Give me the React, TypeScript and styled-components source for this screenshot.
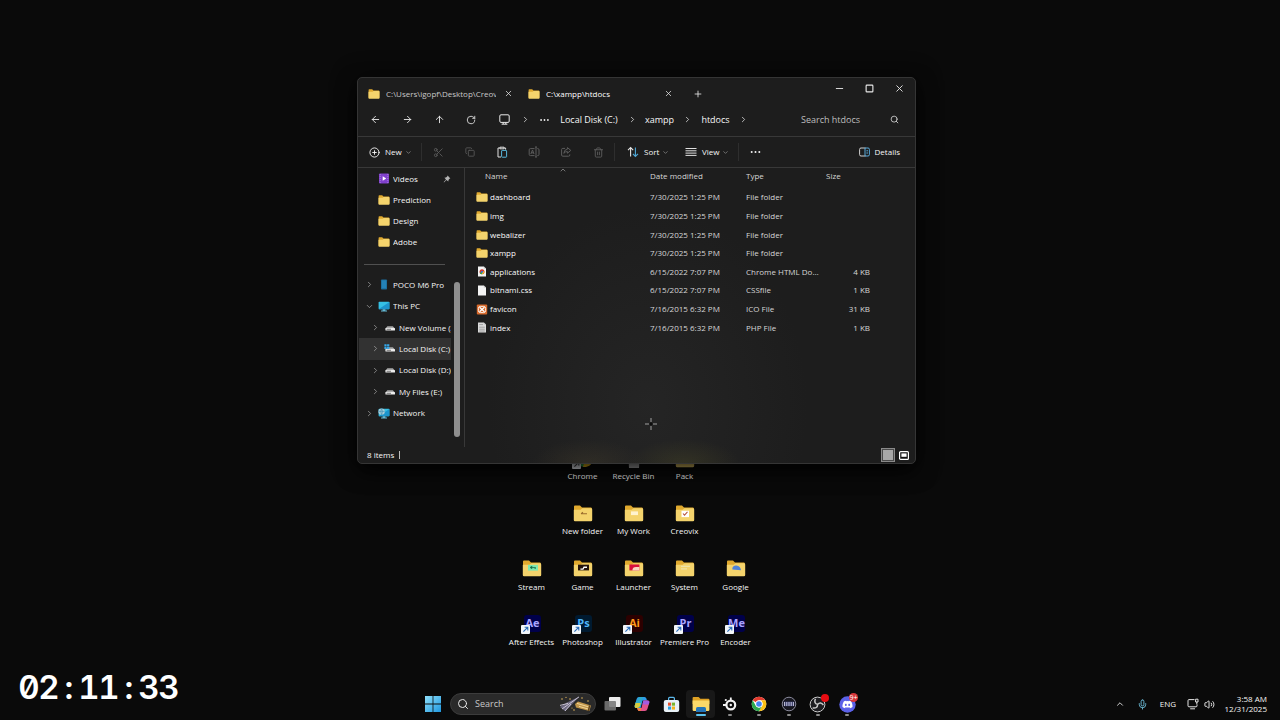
import React from 'react';
import styled, { createGlobalStyle } from 'styled-components';
import {
  ArrowLeft, ArrowRight, ArrowUp, RotateCw, ChevronRight, ChevronDown, ChevronUp, X, Plus,
  Minus, Square, Search, CirclePlus, Scissors, Copy, Trash2, Mic, Volume2,
} from 'lucide-react';
import { FaDiscord } from 'react-icons/fa';

const Global = createGlobalStyle`
  *, *::before, *::after { box-sizing: border-box; }
  html, body { margin: 0; background: #0a0a0a; }
  body, button, input { font-family: "Open Sans", "Noto Sans", sans-serif; font-size: 8px; line-height: 12px; color: #f6f6f6; }
  button { background: none; border: 0; padding: 0; }
  svg { display: block; flex: none; }
`;

/* ---------- desktop ---------- */
const Desktop = styled.div`
  position: relative;
  display: flex;
  flex-direction: column;
  min-height: 100vh;
  overflow: hidden;
  background: #0a0a0a;
`;
const IconField = styled.main`
  flex: 1;
  display: flex;
  flex-direction: column;
  align-items: center;
  justify-content: flex-end;
  padding: 0 13px 40px 0;
`;
const IconRows = styled.div`
  height: 200px;
  display: flex;
  flex-direction: column;
  justify-content: space-between;
`;
const IconRow = styled.div`
  display: flex;
  justify-content: center;
`;
const Shortcut = styled.button`
  width: 51px;
  display: flex;
  flex-direction: column;
  align-items: center;
  gap: 2px;
  white-space: nowrap;
`;
const Art = styled.span`
  height: 20px;
  display: flex;
  align-items: center;
`;

/* ---------- explorer window ---------- */
const Window = styled.section`
  position: absolute;
  top: 77px;
  left: calc(50% - 283px);
  width: 559px;
  height: 387px;
  display: flex;
  flex-direction: column;
  border: 1px solid #353535;
  border-radius: 5px;
  overflow: hidden;
  background:
    radial-gradient(56px 24px at 230px 100%, rgba(90, 78, 50, .24), transparent),
    radial-gradient(56px 24px at 326px 100%, rgba(96, 92, 40, .26), transparent),
    radial-gradient(160px 200px at 290px 85%, rgba(60, 60, 60, .25), transparent),
    #1d1d1d;
  box-shadow: 0 8px 20px rgba(0, 0, 0, .7), 0 2px 24px rgba(0, 0, 0, .5);
`;
const TitleBar = styled.header`
  height: 28px;
  display: flex;
  align-items: flex-start;
`;
const Tab = styled.div<{ $active?: boolean }>`
  width: 160px;
  height: 31px;
  display: flex;
  align-items: center;
  gap: 6px;
  padding: 0 2px 0 10px;
  color: ${p => (p.$active ? '#ffffff' : '#c8c8c8')};
`;
const TabName = styled.span`
  flex: 1;
  margin-right: -2px;
  overflow: hidden;
  white-space: nowrap;
`;
const IconButton = styled.button<{ $w?: number; $dim?: boolean }>`
  width: ${p => p.$w ?? 32}px;
  height: 20px;
  display: flex;
  flex: none;
  align-items: center;
  justify-content: center;
  color: ${p => (p.$dim ? '#5c5c5c' : '#e8e8e8')};
`;
const NewTab = styled(IconButton)`
  height: 31px;
`;
const WindowControls = styled.div`
  display: flex;
  padding-right: 1px;
`;
const Spacer = styled.span`
  flex: 1;
`;
const NavBar = styled.nav`
  height: 31px;
  display: flex;
  align-items: center;
  padding: 0 9px 3px 1px;
  border-bottom: 1px solid #383838;
`;
const Crumb = styled.button<{ $w: number }>`
  width: ${p => p.$w}px;
  font-size: 9px;
  white-space: nowrap;
`;
const SearchBox = styled.input`
  width: 82px;
  padding: 0;
  border: 0;
  outline: 0;
  background: none;
  font-size: 9px;
  &::placeholder { color: #bdbdbd; opacity: 1; }
`;
const CommandBar = styled.div`
  height: 31px;
  display: flex;
  align-items: center;
  padding: 0 15px 0 11px;
  border-bottom: 1px solid #383838;
`;
const Command = styled.button<{ $w: number }>`
  width: ${p => p.$w}px;
  display: flex;
  align-items: center;
  gap: 5px;
  & > svg:last-child { color: #a8a8a8; margin-left: -2px; }
`;
const Details = styled.button`
  display: flex;
  align-items: center;
  gap: 5px;
`;
const Rule = styled.span`
  width: 1px;
  height: 18px;
  background: #2e2e2e;
`;
const Gap = styled.span`
  width: 12px;
`;
const Body = styled.div`
  flex: 1;
  display: flex;
  min-height: 0;
`;
const Sidebar = styled.aside`
  position: relative;
  width: 107px;
  border-right: 1px solid #383838;
`;
const TreeGroup = styled.ul<{ $h: number }>`
  list-style: none;
  margin: 0;
  padding: 0 13px 0 1px;
  height: ${p => p.$h}px;
  display: grid;
  grid-auto-rows: 1fr;
`;
const TreeItem = styled.li<{ $level?: number; $selected?: boolean }>`
  display: flex;
  align-items: center;
  gap: 3px;
  min-width: 0;
  padding-left: ${p => (p.$level ? 10 : 4)}px;
  background: ${p => (p.$selected ? '#323232' : 'none')};
`;
const Twist = styled.span`
  width: 12px;
  display: flex;
  justify-content: center;
  color: #a0a0a0;
`;
const TreeName = styled.span`
  flex: 1;
  overflow: hidden;
  white-space: nowrap;
`;
const Divider = styled.hr`
  width: 81px;
  margin: 11px 0 9px 6px;
  border: 0;
  border-top: 1px solid #505050;
`;
const ScrollThumb = styled.span`
  position: absolute;
  right: 4px;
  top: 114px;
  width: 6px;
  height: 155px;
  border-radius: 3px;
  background: #8f8f8f;
`;
const Files = styled.div`
  position: relative;
  flex: 1;
`;
const SortMark = styled.span`
  position: absolute;
  left: 94px;
  top: -2px;
  color: #a0a0a0;
`;
const Table = styled.table`
  display: block;
  thead, tbody { display: grid; grid-auto-rows: 1fr; color: #d6d6d6; }
  thead { height: 20px; padding-bottom: 4px; }
  tbody { height: 149px; }
  tr { display: grid; grid-template-columns: 185px 96px 80px 44px; align-items: center; }
  th, td { padding: 0; font-weight: 400; text-align: left; white-space: nowrap; }
  th:first-child { padding-left: 20px; }
  td:nth-child(3) { width: 76px; overflow: hidden; text-overflow: ellipsis; }
  td:last-child { text-align: right; }
`;
const FileName = styled.span`
  display: flex;
  align-items: center;
  gap: 2px;
  padding-left: 11px;
  color: #fafafa;
`;
const StatusBar = styled.footer`
  height: 16px;
  display: flex;
  align-items: center;
  gap: 5px;
  padding: 0 4px 0 9px;
`;
const Caret = styled.span`
  width: 1px;
  height: 8px;
  background: #bdbdbd;
`;
const ViewButton = styled.button<{ $on?: boolean }>`
  width: 14px;
  height: 14px;
  display: flex;
  align-items: center;
  justify-content: center;
  margin-left: ${p => (p.$on ? 0 : -3)}px;
  border: 1px solid ${p => (p.$on ? '#8a8a8a' : 'transparent')};
  background: ${p => (p.$on ? '#4a4a4a' : 'none')};
`;
const Pointer = styled.span`
  position: absolute;
  left: calc(50% + 5px);
  top: 418px;
`;

/* ---------- overlay and taskbar ---------- */
const Timer = styled.time`
  position: absolute;
  left: 19px;
  bottom: 13px;
  font: 600 33px/40px Inter, "Liberation Mono", monospace;
  font-feature-settings: "tnum", "zero";
  display: grid;
  grid-auto-flow: column;
  grid-auto-columns: 20px;
  justify-items: center;
  color: #fff;
`;
const Taskbar = styled.footer`
  height: 32px;
  display: grid;
  grid-template-columns: 1fr auto 1fr;
  align-items: center;
`;
const Dock = styled.div`
  grid-column: 2;
  display: flex;
  align-items: center;
  padding-left: 5px;
`;
const TaskSearch = styled.label`
  width: 146px;
  height: 22px;
  margin: 0 2px 0 7px;
  padding: 0 2px 0 6px;
  display: flex;
  align-items: center;
  gap: 6px;
  border: 1px solid #3c3c3c;
  border-radius: 11px;
  background: #2a2a2a;
`;
const TaskInput = styled.input`
  flex: 1;
  min-width: 0;
  padding: 0;
  border: 0;
  outline: 0;
  background: none;
  font-size: 9px;
  &::placeholder { color: #c8c8c8; opacity: 1; }
`;
const Apps = styled.div`
  width: 264px;
  display: grid;
  grid-template-columns: repeat(9, 1fr);
`;
const AppButton = styled.button<{ $state?: 'active' | 'open' }>`
  position: relative;
  height: 28px;
  display: flex;
  align-items: center;
  justify-content: center;
  border-radius: 4px;
  background: ${p => (p.$state === 'active' ? '#181818' : 'none')};
  &::after {
    content: "";
    position: absolute;
    bottom: 2px;
    width: ${p => (p.$state === 'active' ? 10 : 4)}px;
    height: 2px;
    border-radius: 1px;
    background: ${p => (p.$state === 'active' ? '#5cc4f0' : p.$state ? '#8c8c8c' : 'none')};
  }
`;
const Badge = styled.span`
  position: absolute;
  top: 3px;
  right: 4px;
  min-width: 9px;
  height: 9px;
  border-radius: 5px;
  background: #d8363a;
  color: #fff;
  font-size: 7px;
  line-height: 9px;
  text-align: center;
`;
const RedDot = styled(Badge)`
  top: 4px;
  min-width: 8px;
  height: 8px;
  background: #e80c12;
`;
const Tray = styled.div`
  justify-self: end;
  display: flex;
  align-items: center;
  padding-right: 13px;
`;
const TrayButton = styled.button<{ $w: number }>`
  width: ${p => p.$w}px;
  display: flex;
  justify-content: center;
`;
const Clock = styled.div`
  width: 53px;
  text-align: right;
  line-height: 10px;
  white-space: nowrap;
`;

/* ---------- drawings ---------- */
const Folder = ({ w = 12, h = 10, children }: { w?: number; h?: number; children?: React.ReactNode }) => (
  <svg width={w} height={h} viewBox="0 0 20 16" preserveAspectRatio="none">
    <path d="M1 1.5Q1 .5 2 .5H7L9 2.4H18Q19 2.6 19 4V14H1Z" fill="#e0a92e" />
    <path d="M1 4.4H7.6L9.3 3H18Q19.2 3 19.2 4.2V14.2Q19.2 15.4 18 15.4H2Q.8 15.4.8 14.2V4.6Z" fill="#f4d36c" />
    {children}
  </svg>
);
const Adobe = ({ text, bg, fg }: { text: string; bg: string; fg: string }) => (
  <svg width="22" height="20" viewBox="0 0 22 20">
    <rect x="3" y="1" width="17" height="17" rx="3" fill={bg} />
    <text x="11.5" y="13.4" textAnchor="middle" fontSize="11" fontWeight="700" fontFamily="Open Sans, sans-serif" fill={fg}>{text}</text>
    <rect x="0" y="11" width="9" height="9" rx="1" fill="#f2f6fa" />
    <path d="M2.4 17.6 6.6 13.4M3.6 13.2H6.8V16.4" fill="none" stroke="#2a6cb8" strokeWidth="1.1" />
  </svg>
);
const ChromeLogo = ({ size = 17 }: { size?: number }) => (
  <svg width={size} height={size} viewBox="0 0 48 48">
    <circle cx="24" cy="24" r="22" fill="#fff" />
    <path d="M24 2A22 22 0 0 1 43 13H24A11 11 0 0 0 14.5 18.5L5 13A22 22 0 0 1 24 2Z" fill="#e33b2e" />
    <path d="M43 13A22 22 0 0 1 24 46L33.5 29.5A11 11 0 0 0 33.5 18.5L30 13Z" fill="#fbc116" />
    <path d="M5 13A22 22 0 0 0 24 46L33.5 29.5A11 11 0 0 1 14.5 29.5Z" fill="#2da94f" />
    <circle cx="24" cy="24" r="10.5" fill="#fff" />
    <circle cx="24" cy="24" r="8.4" fill="#4285f4" />
  </svg>
);
const ChromeShortcut = () => (
  <svg width="22" height="22" viewBox="0 0 22 22">
    <path d="M4 11A8.5 8.5 0 0 0 12 20L14 11Z" fill="#2da94f" />
    <path d="M21 9A9 9 0 0 1 11 20L13 12Z" fill="#f3c21c" />
    <rect x="0" y="13" width="9" height="9" rx="1" fill="#f2f6fa" />
    <path d="M2.4 19.6 6.6 15.4M3.6 15.2H6.8V18.4" fill="none" stroke="#444" strokeWidth="1.1" />
  </svg>
);
const Place = () => (
  <svg width="11" height="11" viewBox="0 0 11 11" fill="none" stroke="currentColor" strokeWidth="1">
    <rect x=".8" y=".8" width="9.4" height="7.6" rx="1.2" /><path d="M2.6 10.2H8.4M4.2 8.4V10M6.8 8.4V10" />
  </svg>
);
const Drive = ({ system }: { system?: boolean }) => (
  <svg width="12" height="10" viewBox="0 0 12 10">
    <path d="M3.4 3.2H8.8L10.6 5.2H1.6Z" fill="#a8a8a8" />
    <rect x="1.4" y="5" width="9.6" height="2.6" rx=".6" fill="#ececec" />
    <path d="M2.6 6.3H7" stroke="#444" strokeWidth=".7" />
    {system && <path d="M.4.2H2.6V2.4H.4ZM3.1.2H5.3V2.4H3.1ZM.4 2.9H2.6V5.1H.4ZM3.1 2.9H5.3V5.1H3.1Z" fill="#35a8ea" />}
  </svg>
);
const Screen = ({ globe }: { globe?: boolean }) => (
  <svg width="12" height="11" viewBox="0 0 12 11">
    <rect x=".6" y=".8" width="10.8" height="7.4" rx=".8" fill="#35c0e4" />
    <path d="M.6 8.2 11.4.9V7.4Q11.4 8.2 10.6 8.2Z" fill="#1c94cc" />
    <path d="M4.6 8.2H7.4V9.6H9V10.4H3V9.6H4.6Z" fill="#64b9d6" />
    {globe && <><circle cx="3.6" cy="3.6" r="3.2" fill="#a9cbd8" /><path d="M.6 3.4H6.7M3.6.5Q1.8 3.5 3.6 6.7M3.6.5Q5.4 3.5 3.6 6.7" fill="none" stroke="#3b8fb4" strokeWidth=".6" /></>}
  </svg>
);
const Phone = () => (
  <svg width="12" height="11" viewBox="0 0 12 11"><rect x="3" y=".5" width="6" height="10" rx=".8" fill="#1c6c9c" /><rect x="3.8" y="1.3" width="4.4" height="8" fill="#2482b8" /></svg>
);
const Video = () => (
  <svg width="12" height="11" viewBox="0 0 12 11"><rect x="1" y=".5" width="10" height="10" rx="1" fill="#8040cc" /><path d="M2.2 1V10M9.8 1V10" stroke="#b58ae4" strokeWidth=".8" strokeDasharray="1 1" /><path d="M4.7 3.2 8.2 5.5 4.7 7.8Z" fill="#fff" /></svg>
);
const PinIcon = () => (
  <svg width="8" height="8" viewBox="0 0 8 8"><path d="M4.6.6 7.4 3.4 6.5 3.8 5.5 5 5.3 6.6 3.4 4.9 1 7.4.7 7 3 4.6 1.4 2.8 3 2.5 4.2 1.5Z" fill="#b4b4b4" /></svg>
);
const Page = ({ kind }: { kind: 'chrome' | 'blank' | 'lines' | 'xampp' }) => (
  <svg width="12" height="11" viewBox="0 0 12 11">
    {kind === 'xampp' ? (
      <>
        <rect x=".8" y=".4" width="10.4" height="10.2" rx="1" fill="#d8692a" />
        <path d="M3.6 3.2 8.4 7.8M8.4 3.2 3.6 7.8" stroke="#fff" strokeWidth="1.3" />
        <rect x="2.4" y="2.4" width="7.2" height="6.2" rx="2" fill="none" stroke="#fff" strokeWidth=".9" />
      </>
    ) : (
      <>
        <path d="M2 .4H7.8L10 2.6V10.6H2Z" fill={kind === 'lines' ? '#dadada' : '#f4f4f4'} />
        <path d="M7.8.4 10 2.6H7.8Z" fill="#bdbdbd" />
        {kind === 'lines' && <path d="M3.2 2.6H7M3.2 5.2H8.8M3.2 7.2H8.8M3.2 9H8.8" stroke="#888" strokeWidth=".7" />}
        {kind === 'chrome' && <><circle cx="6" cy="5.8" r="2.5" fill="#d9392e" /><path d="M3.6 6.4A2.5 2.5 0 0 0 6 8.3L7 6Z" fill="#2da94f" /><path d="M6 8.3A2.5 2.5 0 0 0 8.4 5.2L6 5.4Z" fill="#e9b72c" /><circle cx="6" cy="5.8" r="1.1" fill="#3b6fd0" /></>}
      </>
    )}
  </svg>
);
const Paste = () => (
  <svg width="12" height="12" viewBox="0 0 12 12" fill="none" stroke="#e2e2e2" strokeWidth="1">
    <path d="M4 2H2V11H5M8 2H9.6V3.6M4 1.2H8V2.8H4Z" />
    <rect x="5.6" y="4.4" width="5" height="6.8" rx=".6" stroke="#58b8dc" />
  </svg>
);
const Rename = () => (
  <svg width="12" height="12" viewBox="0 0 12 12" fill="none" stroke="currentColor" strokeWidth="1">
    <path d="M6.5 2.6H2.4Q1.2 2.6 1.2 3.8V8.4Q1.2 9.6 2.4 9.6H6.5M9.2 2.6H9.8Q11 2.6 11 3.8V8.4Q11 9.6 9.8 9.6H9.2M8 1V11M7 1H9M7 11H9M2.8 8 4.5 4 6 8M3.3 6.8H5.6" />
  </svg>
);
const Share = () => (
  <svg width="12" height="12" viewBox="0 0 12 12" fill="none" stroke="currentColor" strokeWidth="1">
    <path d="M5 2.4H2.8Q1.6 2.4 1.6 3.6V9Q1.6 10.2 2.8 10.2H8.6Q9.8 10.2 9.8 9V8.4M7.4 1.6 10.8 4.4 7.4 7.2V5.6Q5 5.4 3.8 7.4Q4 3.6 7.4 3.2Z" />
  </svg>
);
const SortIcon = () => (
  <svg width="12" height="12" viewBox="0 0 12 12" fill="none" strokeWidth="1.1">
    <path d="M3.6 10.6V1.6M1 4.2 3.6 1.6 6.2 4.2" stroke="#e6e6e6" />
    <path d="M8.4 1.4V10.4M5.9 7.9 8.4 10.4 11 7.9" stroke="#4fa9d8" />
  </svg>
);
const ViewIcon = () => (
  <svg width="12" height="10" viewBox="0 0 12 10"><path d="M.5 1.5H11.5M.5 3.8H11.5M.5 6.1H11.5M.5 8.4H11.5" stroke="#e0e0e0" strokeWidth="1" /></svg>
);
const DetailsIcon = () => (
  <svg width="11" height="10" viewBox="0 0 11 10" fill="none">
    <path d="M6.5 1H2Q.6 1 .6 2.4V7.6Q.6 9 2 9H6.5" stroke="#d0d0d0" />
    <path d="M6 1H9Q10.4 1 10.4 2.4V7.6Q10.4 9 9 9H6ZM7.4 3.8H9M7.4 6H9" stroke="#58a8d8" />
  </svg>
);
const Dots = ({ size = 10 }: { size?: number }) => (
  <svg width={size} height="4" viewBox="0 0 10 4" fill="#f0f0f0"><circle cx="1.2" cy="2" r="1" /><circle cx="5" cy="2" r="1" /><circle cx="8.8" cy="2" r="1" /></svg>
);
const StartLogo = () => (
  <svg width="16" height="16" viewBox="0 0 16 16">
    <defs><linearGradient id="win" x1="0" y1="0" x2="1" y2="1"><stop stopColor="#8fe0fb" /><stop offset="1" stopColor="#1f98e0" /></linearGradient></defs>
    <path d="M0 0H7.6V7.6H0ZM8.4 0H16V7.6H8.4ZM0 8.4H7.6V16H0ZM8.4 8.4H16V16H8.4Z" fill="url(#win)" />
  </svg>
);
const Confetti = () => (
  <svg width="34" height="16" viewBox="0 0 34 16">
    <path d="M1 11 8 6.4 20 .8 11 10.4 6 15Z" fill="#6c6880" />
    <path d="M1 9.4 9 7.4M3 13 20 .9M6 15 12 8" stroke="#d2ccdc" strokeWidth=".9" />
    <path d="M16 8 19 5.4 32 9.4 30.4 15 17 11.4Z" fill="#c0954a" />
    <path d="M18 7.4 30 11M20 10.4 29 13" stroke="#f0d59a" strokeWidth="1" />
    <path d="M30.6 9.4 29.4 15" stroke="#5e421c" strokeWidth="1.4" />
    <g fill="#e0b45c"><circle cx="3" cy="3" r=".8" /><circle cx="11" cy="3" r=".8" /><circle cx="23" cy="2" r=".8" /><circle cx="29" cy="5" r=".8" /><circle cx="15" cy="14" r=".8" /><circle cx="7" cy="1.4" r=".6" /><circle cx="13" cy="12" r=".6" /></g>
  </svg>
);
const TaskView = () => (
  <svg width="17" height="16" viewBox="0 0 17 16"><rect x="5" y="1" width="11.5" height="10" rx="1" fill="#ececec" /><rect x=".5" y="5" width="11.5" height="9.5" rx="1" fill="#777" fillOpacity=".88" /></svg>
);
const Copilot = () => (
  <svg width="16" height="16" viewBox="0 0 16 16">
    <path d="M5 1H10.5Q12 1 12.4 2.6L13 4.6H8.6L6.6 12Q6 14 4.4 12H2.6Q.2 12 .8 9.4L2.6 3Q3.2 1 5 1Z" fill="#2c9be8" />
    <path d="M5 1H9L6.4 9Q5.8 12 3 12Q.2 12 .8 9.4L1.6 6.6Z" fill="#2fa8c8" />
    <path d="M1.6 7 .8 9.4Q.2 12 2.8 12Q5.4 12 6 10L6.8 7Z" fill="#d8cc3c" />
    <path d="M11 15H5.5Q4 15 3.6 13.4L3.2 12H7.4L9.4 4.6H13.4Q15.8 4.6 15.2 7L13.4 13Q12.8 15 11 15Z" fill="#e0538c" />
    <path d="M9.4 4.6H13.4Q15.8 4.6 15.2 7L14.8 8.4H8.4Z" fill="#a45be0" />
    <path d="M3.2 12H7.4L6.6 15H5.5Q4 15 3.6 13.4Z" fill="#f0803c" />
  </svg>
);
const Store = () => (
  <svg width="17" height="17" viewBox="0 0 17 17">
    <path d="M5.6 4.5V2.4Q5.6 1.4 6.6 1.4H10.4Q11.4 1.4 11.4 2.4V4.5" fill="none" stroke="#5cb8ea" strokeWidth="1.2" />
    <rect x=".8" y="4" width="15.4" height="12" rx="2" fill="#e9f1f7" />
    <path d="M5 6.6H8.1V9.7H5Z" fill="#e8502c" /><path d="M8.9 6.6H12V9.7H8.9Z" fill="#78b52c" /><path d="M5 10.5H8.1V13.6H5Z" fill="#2a9fe0" /><path d="M8.9 10.5H12V13.6H8.9Z" fill="#f3b41c" />
  </svg>
);
const Explorer = () => (
  <svg width="18" height="17" viewBox="0 0 18 17">
    <path d="M.6 2Q.6 1 1.6 1H6.6L8.4 2.8H16.4Q17.4 2.8 17.4 3.8V8H.6Z" fill="#e0a224" />
    <path d="M.6 4.4H17.4V13.8Q17.4 15 16.2 15H1.8Q.6 15 .6 13.8Z" fill="#fad869" />
    <path d="M4 16V12.6Q4 11 5.6 11H12.4Q14 11 14 12.6V16Z" fill="#2273b8" />
  </svg>
);
const SteelSeries = () => (
  <svg width="16" height="16" viewBox="0 0 16 16" fill="none" stroke="#f2f2f2">
    <circle cx="8.8" cy="9" r="4.4" strokeWidth="2.2" /><circle cx="8.8" cy="9" r="1.2" fill="#f2f2f2" stroke="none" />
    <path d="M1 9H4M8.8 1.6V4" strokeWidth="1.8" /><circle cx="3.8" cy="4" r="1.1" fill="#f2f2f2" stroke="none" />
  </svg>
);
const Keys = () => (
  <svg width="16" height="16" viewBox="0 0 16 16">
    <circle cx="8" cy="8" r="6.8" fill="#17171f" stroke="#8a8a9c" strokeWidth="1" />
    <rect x="2.8" y="5.6" width="10.4" height="4.6" fill="#363a66" /><path d="M3.6 6V10M5.8 6V10M8 6V10M10.2 6V10M12.4 6V10" stroke="#c8c8e0" strokeWidth="1" />
  </svg>
);
const Obs = () => (
  <svg width="17" height="17" viewBox="0 0 17 17" fill="none" stroke="#c9c9c9">
    <circle cx="8.5" cy="8.5" r="7.4" fill="#1e1e22" strokeWidth="1" />
    <path d="M8.6 8.4Q4.6 7.2 6.4 2.8M8.6 8.4Q11.6 5.4 14.4 9M8.6 8.4Q8.6 12.8 3.6 12" strokeWidth="1.5" />
  </svg>
);
const Network = () => (
  <svg width="12" height="12" viewBox="0 0 12 12" fill="none" stroke="#e4e4e4" strokeWidth="1">
    <path d="M7.5 1.6H2Q1 1.6 1 2.6V7.8Q1 8.8 2 8.8H9Q10 8.8 10 7.8V6.4M3.2 10.8H8M8.6 1.2H11V4H8.6ZM9.8 4V6.2" />
  </svg>
);

/* ---------- data ---------- */
type Item = { name: string; art: React.ReactNode };
const folder = (mark?: React.ReactNode) => <Folder w={20} h={17}>{mark}</Folder>;
const rows: Item[][] = [
  [
    { name: 'Chrome', art: <ChromeShortcut /> },
    { name: 'Recycle Bin', art: <svg width="14" height="20" viewBox="0 0 14 20"><path d="M1 1H13L12 20H2Z" fill="#b4b4b4" /></svg> },
    { name: 'Pack', art: <Folder w={20} h={19} /> },
  ],
  [
    { name: 'New folder', art: folder(<path d="M8 8.2H14M8 8.2 10 6.8" stroke="#9a6c2c" strokeWidth="1" />) },
    { name: 'My Work', art: folder(<path d="M7 6H14V9.5H7Z" fill="#fff3cf" />) },
    { name: 'Creovix', art: folder(<><rect x="6.5" y="5.4" width="7.5" height="6" fill="#fff" /><path d="M8 8 9.5 9.6 12.5 6.5" fill="none" stroke="#b5523c" strokeWidth="1" /></>) },
  ],
  [
    { name: 'Stream', art: folder(<><rect x="6" y="4.6" width="10" height="5.4" fill="#7ee8b0" /><path d="M8 7 10 5.8V8.2ZM10 7H13.5V8.2" fill="#17704a" stroke="#17704a" strokeWidth=".6" /></>) },
    { name: 'Game', art: folder(<><rect x="5" y="4.4" width="11" height="5.4" fill="#24140c" /><path d="M7.4 8.6H10L11 6.8H14" fill="none" stroke="#fff" strokeWidth="1.3" /></>) },
    { name: 'Launcher', art: folder(<><rect x="5.4" y="4.2" width="10" height="5.6" fill="#d8103c" /><path d="M8.4 9.8Q8.4 6.6 12 6.6H15.4V9.8Z" fill="#fbd4c0" /></>) },
    { name: 'System', art: folder(<path d="M6 6H15M6 8.4H12" stroke="#efe3a8" strokeWidth="1.2" />) },
    { name: 'Google', art: folder(<path d="M6.4 9V7.4Q7.6 4.8 10.4 5.2Q14.6 6 15 9.6Z" fill="#4f82d8" />) },
  ],
  [
    { name: 'After Effects', art: <Adobe text="Ae" bg="#00004a" fg="#a9a4ff" /> },
    { name: 'Photoshop', art: <Adobe text="Ps" bg="#001a30" fg="#4fb4f8" /> },
    { name: 'Illustrator', art: <Adobe text="Ai" bg="#2c0000" fg="#ff9a1a" /> },
    { name: 'Premiere Pro', art: <Adobe text="Pr" bg="#00004a" fg="#a9a4ff" /> },
    { name: 'Encoder', art: <Adobe text="Me" bg="#00004a" fg="#a9a4ff" /> },
  ],
];

const quick = [
  { name: 'Videos', icon: <Video />, pinned: true },
  { name: 'Prediction', icon: <Folder /> },
  { name: 'Design', icon: <Folder /> },
  { name: 'Adobe', icon: <Folder /> },
];
const devices = [
  { name: 'POCO M6 Pro', icon: <Phone /> },
  { name: 'This PC', icon: <Screen />, open: true },
  { name: 'New Volume (A:)', icon: <Drive />, level: 1 },
  { name: 'Local Disk (C:)', icon: <Drive system />, level: 1, selected: true },
  { name: 'Local Disk (D:)', icon: <Drive />, level: 1 },
  { name: 'My Files (E:)', icon: <Drive />, level: 1 },
  { name: 'Network', icon: <Screen globe /> },
];
const files: [React.ReactNode, string, string, string, string][] = [
  [<Folder />, 'dashboard', '7/30/2025 1:25 PM', 'File folder', ''],
  [<Folder />, 'img', '7/30/2025 1:25 PM', 'File folder', ''],
  [<Folder />, 'webalizer', '7/30/2025 1:25 PM', 'File folder', ''],
  [<Folder />, 'xampp', '7/30/2025 1:25 PM', 'File folder', ''],
  [<Page kind="chrome" />, 'applications', '6/15/2022 7:07 PM', 'Chrome HTML Document', '4 KB'],
  [<Page kind="blank" />, 'bitnami.css', '6/15/2022 7:07 PM', 'CSSfile', '1 KB'],
  [<Page kind="xampp" />, 'favicon', '7/16/2015 6:32 PM', 'ICO File', '31 KB'],
  [<Page kind="lines" />, 'index', '7/16/2015 6:32 PM', 'PHP File', '1 KB'],
];

const ExplorerWindow = () => (
  <Window aria-label="htdocs">
    <TitleBar>
      <Tab>
        <Folder />
        <TabName>C:\Users\igopf\Desktop\Creovix</TabName>
        <IconButton $w={16} aria-label="Close tab"><X size={9} /></IconButton>
      </Tab>
      <Tab $active>
        <Folder />
        <TabName>C:\xampp\htdocs</TabName>
        <IconButton $w={16} aria-label="Close tab"><X size={9} /></IconButton>
      </Tab>
      <NewTab $w={40} aria-label="New tab"><Plus size={10} /></NewTab>
      <Spacer />
      <WindowControls>
        <IconButton $w={30} aria-label="Minimize"><Minus size={11} /></IconButton>
        <IconButton $w={30} aria-label="Maximize"><Square size={9} strokeWidth={3} /></IconButton>
        <IconButton $w={30} aria-label="Close"><X size={11} /></IconButton>
      </WindowControls>
    </TitleBar>
    <NavBar>
      <IconButton aria-label="Back"><ArrowLeft size={11} /></IconButton>
      <IconButton aria-label="Forward"><ArrowRight size={11} /></IconButton>
      <IconButton aria-label="Up"><ArrowUp size={11} /></IconButton>
      <IconButton aria-label="Refresh"><RotateCw size={10} /></IconButton>
      <IconButton $w={34} aria-label="Location"><Place /></IconButton>
      <IconButton $w={9} aria-label="Expand"><ChevronRight size={9} /></IconButton>
      <IconButton $w={28} aria-label="More locations"><Dots size={9} /></IconButton>
      <Crumb $w={62}>Local Disk (C:)</Crumb>
      <IconButton $w={24} aria-label="Expand Local Disk"><ChevronRight size={9} /></IconButton>
      <Crumb $w={31}>xampp</Crumb>
      <IconButton $w={25} aria-label="Expand xampp"><ChevronRight size={9} /></IconButton>
      <Crumb $w={31}>htdocs</Crumb>
      <IconButton $w={25} aria-label="Expand htdocs"><ChevronRight size={9} /></IconButton>
      <Spacer />
      <SearchBox aria-label="Search htdocs" placeholder="Search htdocs" />
      <IconButton $w={23} aria-label="Search"><Search size={9} /></IconButton>
    </NavBar>
    <CommandBar>
      <Command $w={52}><CirclePlus size={11} />New<ChevronDown size={7} /></Command>
      <Rule />
      <IconButton $dim aria-label="Cut"><Scissors size={11} /></IconButton>
      <IconButton $dim aria-label="Copy"><Copy size={10} /></IconButton>
      <IconButton aria-label="Paste"><Paste /></IconButton>
      <IconButton $dim aria-label="Rename"><Rename /></IconButton>
      <IconButton $dim aria-label="Share"><Share /></IconButton>
      <IconButton $dim aria-label="Delete"><Trash2 size={11} /></IconButton>
      <Rule />
      <Gap />
      <Command $w={58}><SortIcon />Sort<ChevronDown size={7} /></Command>
      <Command $w={53}><ViewIcon />View<ChevronDown size={7} /></Command>
      <Rule />
      <IconButton aria-label="More"><Dots size={11} /></IconButton>
      <Spacer />
      <Details><DetailsIcon />Details</Details>
    </CommandBar>
    <Body>
      <Sidebar>
        <TreeGroup $h={85}>
          {quick.map(q => (
            <TreeItem key={q.name}>
              <Twist />{q.icon}<TreeName>{q.name}</TreeName>{q.pinned && <PinIcon />}
            </TreeItem>
          ))}
        </TreeGroup>
        <Divider />
        <TreeGroup $h={150}>
          {devices.map(d => (
            <TreeItem key={d.name} $level={d.level} $selected={d.selected}>
              <Twist>{d.open ? <ChevronDown size={9} /> : <ChevronRight size={9} />}</Twist>
              {d.icon}<TreeName>{d.name}</TreeName>
            </TreeItem>
          ))}
        </TreeGroup>
        <ScrollThumb />
      </Sidebar>
      <Files>
        <SortMark><ChevronUp size={8} /></SortMark>
        <Table>
          <thead><tr><th>Name</th><th>Date modified</th><th>Type</th><th>Size</th></tr></thead>
          <tbody>
            {files.map(([icon, name, date, type, size]) => (
              <tr key={name}>
                <td><FileName>{icon}{name}</FileName></td><td>{date}</td><td>{type}</td><td>{size}</td>
              </tr>
            ))}
          </tbody>
        </Table>
      </Files>
    </Body>
    <StatusBar>
      8 items<Caret /><Spacer />
      <ViewButton $on aria-label="Details view"><svg width="10" height="10" viewBox="0 0 10 10"><rect width="10" height="10" fill="#a8a8a8" /></svg></ViewButton>
      <ViewButton aria-label="Thumbnail view"><svg width="10" height="9" viewBox="0 0 10 9"><rect x=".6" y=".6" width="8.8" height="7.8" rx="1" fill="#111" stroke="#fff" strokeWidth="1.2" /><rect x="2.4" y="2.4" width="5.2" height="3.4" fill="#fff" /></svg></ViewButton>
    </StatusBar>
  </Window>
);

export default function App() {
  return (
    <Desktop>
      <Global />
      <IconField>
        <IconRows>
          {rows.map((row, i) => (
            <IconRow key={i}>
              {row.map(it => <Shortcut key={it.name}><Art>{it.art}</Art>{it.name}</Shortcut>)}
            </IconRow>
          ))}
        </IconRows>
      </IconField>
      <ExplorerWindow />
      <Pointer>
        <svg width="12" height="12" viewBox="0 0 12 12"><path d="M6 0V4M6 8V12M0 6H4M8 6H12" stroke="#a0a0a0" strokeWidth="1" /><circle cx="6" cy="6" r="1.4" fill="#0c0c0c" /></svg>
      </Pointer>
      <Timer>{'02:11:33'.split('').map((c, i) => <span key={i}>{c}</span>)}</Timer>
      <Taskbar>
        <Dock>
          <IconButton $w={20} aria-label="Start"><StartLogo /></IconButton>
          <TaskSearch>
            <Search size={12} color="#e8e8e8" />
            <TaskInput aria-label="Search" placeholder="Search" />
            <Confetti />
          </TaskSearch>
          <Apps>
            <AppButton aria-label="Task view"><TaskView /></AppButton>
            <AppButton aria-label="Copilot"><Copilot /></AppButton>
            <AppButton aria-label="Store"><Store /></AppButton>
            <AppButton $state="active" aria-label="File Explorer"><Explorer /></AppButton>
            <AppButton $state="open" aria-label="SteelSeries"><SteelSeries /></AppButton>
            <AppButton $state="open" aria-label="Chrome"><ChromeLogo size={16} /></AppButton>
            <AppButton $state="open" aria-label="Keyboard"><Keys /></AppButton>
            <AppButton $state="open" aria-label="OBS"><Obs /><RedDot /></AppButton>
            <AppButton $state="open" aria-label="Discord">
              <svg width="17" height="17" viewBox="0 0 17 17"><circle cx="8.5" cy="8.5" r="8.2" fill="#5b61e8" /><FaDiscord x="3" y="3" size={11} color="#fff" /></svg>
              <Badge>9+</Badge>
            </AppButton>
          </Apps>
        </Dock>
        <Tray>
          <TrayButton $w={20} aria-label="Hidden icons"><ChevronUp size={10} /></TrayButton>
          <TrayButton $w={24} aria-label="Microphone"><Mic size={11} color="#6fc0dc" /></TrayButton>
          <TrayButton $w={28}>ENG</TrayButton>
          <TrayButton $w={22} aria-label="Network"><Network /></TrayButton>
          <TrayButton $w={10} aria-label="Volume"><Volume2 size={11} /></TrayButton>
          <Clock>3:58 AM<br />12/31/2025</Clock>
        </Tray>
      </Taskbar>
    </Desktop>
  );
}
